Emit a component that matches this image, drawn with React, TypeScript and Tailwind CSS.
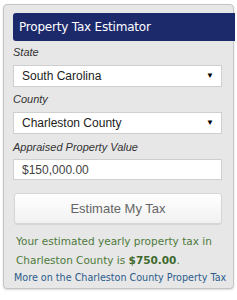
export default function App() {
  const label = "block text-[11px] italic text-[#333] font-['Liberation_Sans',Arial,sans-serif] leading-[14px]";
  const field =
    "flex items-center justify-between w-[209px] bg-white border border-[#cfcfcf] pl-[8px] pr-[7px] text-[12px] text-[#222] font-['Liberation_Sans',Arial,sans-serif]";

  return (
    <div className="w-[237px] h-[300px] bg-white pt-[4px] pl-[3px]">
      <div className="w-[231px] h-[285px] bg-[#e7e7e7] border border-[#c4c4c4] rounded-[4px] shadow-[0_1px_2px_rgba(0,0,0,0.15)]">
        <div className="ml-[9px] mt-[8px] w-[222px] h-[28px] bg-[#1c2a6c] rounded-l-[3px] flex items-center pl-[6px]">
          <span className="text-white text-[12px] font-['DejaVu_Sans',Verdana,sans-serif] tracking-[-0.2px]">
            Property Tax Estimator
          </span>
        </div>

        <div className="pl-[9px] pt-[4px]">
          <span className={label}>State</span>
          <div className={`${field} h-[22px] mt-[6px]`}>
            <span>South Carolina</span>
            <span className="text-[8px] text-black">▼</span>
          </div>

          <span className={`${label} mt-[5px]`}>County</span>
          <div className={`${field} h-[22px] mt-[6px]`}>
            <span>Charleston County</span>
            <span className="text-[8px] text-black">▼</span>
          </div>

          <span className={`${label} mt-[6px]`}>Appraised Property Value</span>
          <div className={`${field} h-[21px] mt-[5px] text-[#444]`}>
            <span>$150,000.00</span>
          </div>

          <button className="mt-[13px] w-[208px] h-[31px] ml-[1px] rounded-[3px] border border-[#d6d6d6] bg-gradient-to-b from-white to-[#f1f1f1] text-[13px] text-[#666] font-['Liberation_Sans',Arial,sans-serif] shadow-[0_1px_1px_rgba(0,0,0,0.08)]">
            Estimate My Tax
          </button>

          <p className="mt-[8px] pl-[3px] text-[10.5px] leading-[19px] text-[#4e7a3b] font-['DejaVu_Sans',Verdana,sans-serif]">
            Your estimated yearly property tax in
            <br />
            Charleston County is <b className="text-[#3f6a2e]">$750.00</b>.
          </p>
          <a className="block pl-[1px] text-[9.6px] leading-[16px] text-[#2b5b8c] font-['DejaVu_Sans',Verdana,sans-serif] whitespace-nowrap">
            More on the Charleston County Property Tax
          </a>
        </div>
      </div>
    </div>
  );
}
